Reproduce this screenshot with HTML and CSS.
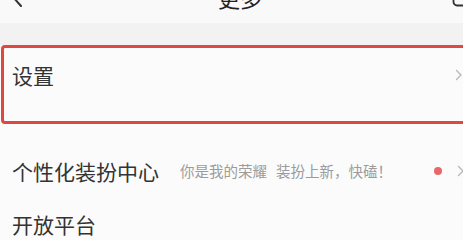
FILE: index.html
```html
<!DOCTYPE html>
<html lang="zh-CN">
<head>
<meta charset="utf-8">
<title>更多</title>
<link rel="stylesheet" href="styles.css">
</head>
<body>
<div class="viewport">
<div class="screen">
  <header class="topbar">
    <div class="tb-left">
      <svg class="back" width="12" height="20" viewBox="0 0 12 20"><path d="M10 1 L2 10 L10 19" fill="none" stroke="#333" stroke-width="2" stroke-linecap="round" stroke-linejoin="round"/></svg>
    </div>
    <div class="title">更多</div>
    <div class="tb-right">
      <svg class="ricon" width="20" height="20" viewBox="0 0 20 20"><rect x="1.5" y="1.5" width="17" height="17" rx="3.5" fill="none" stroke="#333" stroke-width="1.8"/></svg>
    </div>
  </header>
  <div class="band"></div>
  <div class="selected-wrap">
    <div class="row row-selected">
      <span class="label">设置</span>
      <span class="spacer"></span>
      <svg class="chev" width="8" height="12" viewBox="0 0 8 12"><path d="M1.5 1.5 L6 6 L1.5 10.5" fill="none" stroke="#b8b8b8" stroke-width="1.4" stroke-linecap="round" stroke-linejoin="round"/></svg>
    </div>
  </div>
  <div class="list">
    <div class="row">
      <span class="label">个性化装扮中心</span>
      <span class="sub"><span>你是我的荣耀</span><span class="sub-b">装扮上新，快磕！</span></span>
      <span class="spacer"></span>
      <span class="dot"></span>
      <svg class="chev" width="8" height="12" viewBox="0 0 8 12"><path d="M1.5 1.5 L6 6 L1.5 10.5" fill="none" stroke="#b8b8b8" stroke-width="1.4" stroke-linecap="round" stroke-linejoin="round"/></svg>
    </div>
    <div class="row">
      <span class="label">开放平台</span>
    </div>
  </div>
</div>
</div>
</body>
</html>
```
FILE: styles.css
```css
html, body {
  margin: 0;
  padding: 0;
  background: #fbfbfb;
}
body {
  font-family: "Noto Sans CJK SC", "Noto Sans", sans-serif;
  color: #333;
}
.viewport {
  width: 463px;
  height: 237px;
  overflow: hidden;
}
.screen {
  width: 480px;
  margin-top: -24px;
}
.topbar {
  box-sizing: border-box;
  height: 47px;
  padding-bottom: 6px;
  display: grid;
  grid-template-columns: 1fr auto 1fr;
  align-items: center;
  background: #f9f9f9;
}
.tb-left {
  padding-left: 11px;
  display: flex;
  align-items: center;
}
.tb-right {
  justify-self: end;
  padding-right: 8px;
  display: flex;
  align-items: center;
}
.title {
  font-size: 22px;
  line-height: 24px;
  color: #222;
}
.band {
  height: 22px;
  background: #f2f2f2;
}
.row {
  box-sizing: border-box;
  height: 53px;
  display: flex;
  align-items: center;
  padding: 0 15px 0 12px;
  background: #fbfbfb;
}
.selected-wrap {
  padding-left: 1px;
  margin-right: -40px;
}
.row-selected {
  height: 79px;
  align-items: flex-start;
  padding: 15px 54px 0 8px;
  border: 3px solid #de4843;
  border-radius: 4px;
}
.row-selected .chev {
  margin-top: 6px;
}
.label {
  font-size: 21px;
  line-height: 24px;
  color: #333;
  white-space: nowrap;
}
.sub {
  margin-left: 21px;
  font-size: 14.5px;
  color: #9c9c9c;
  white-space: nowrap;
  display: flex;
}
.sub-b {
  margin-left: 9px;
}
.spacer {
  flex: 1;
}
.dot {
  width: 8px;
  height: 8px;
  border-radius: 50%;
  background: #e8676a;
  margin-right: 15px;
}
.list {
  padding-top: 20px;
}
```
